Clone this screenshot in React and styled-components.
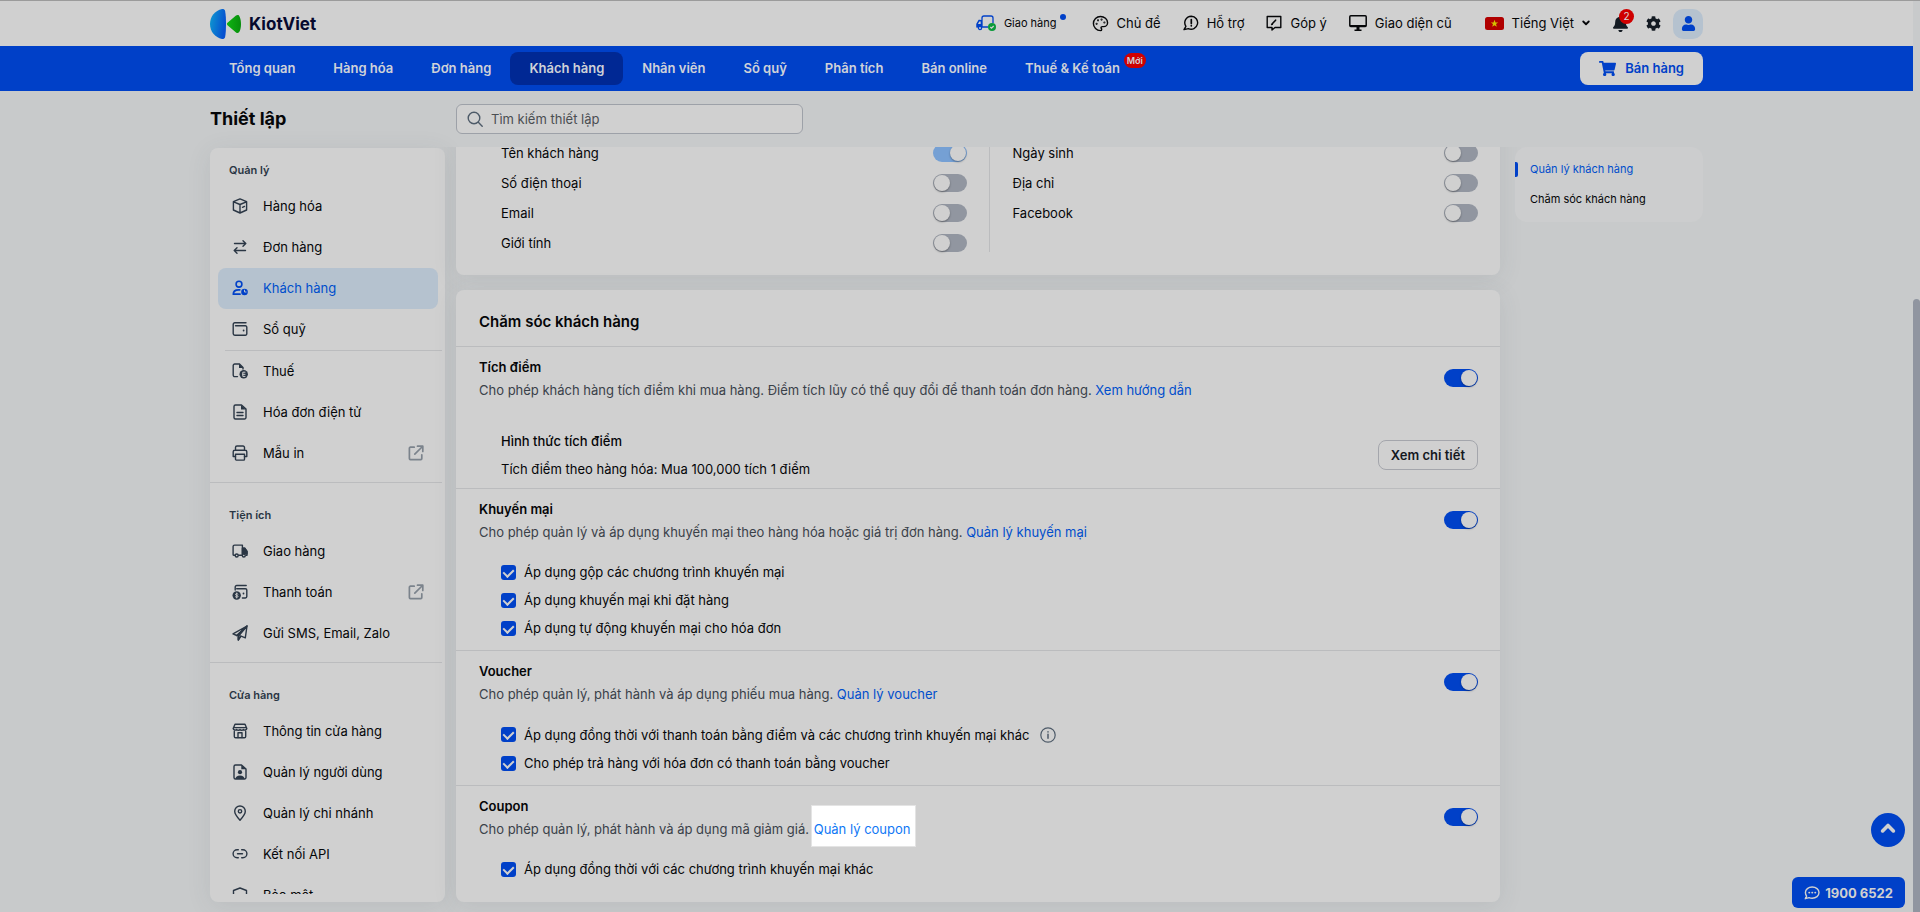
import React from 'react'
import styled, { createGlobalStyle, css } from 'styled-components'
import { FaBell, FaCog, FaUser, FaShoppingCart } from 'react-icons/fa'
import { LuPalette } from 'react-icons/lu'

const color = {
    page: '#c8cacb',
    card: '#d0d0d0',
    line: '#bbbcbe',
    blue: '#0040c8',
    link: '#004ecc',
    navy: '#002894',
    soft: '#b5c2cf',
    text: '#050608',
    muted: '#3a4149',
    icon: '#2a3644',
    grey: '#9196a0',
    red: '#cf0000',
}

const GlobalStyle = createGlobalStyle`
    * {
        box-sizing: border-box;
    }

    body {
        margin: 0;
        background: ${color.page};
        color: ${color.text};
        font-family: 'Inter', sans-serif;
        font-size: 13px;
        line-height: 20px;
    }

    h1, h2, h3, p, ul {
        margin: 0;
        padding: 0;
        font-size: inherit;
    }

    ul {
        list-style: none;
    }

    a {
        color: inherit;
        text-decoration: none;
    }

    button, input, select {
        font: inherit;
        color: inherit;
    }

    button {
        cursor: pointer;
        border: 0;
        padding: 0;
        background: none;
    }
`

const Shell = styled.div`
    display: grid;
    grid-template-columns: 1fr 7px;
    height: 100vh;
    overflow: hidden;
`

const Screen = styled.div`
    display: flex;
    flex-direction: column;
    min-width: 0;
    min-height: 0;
`

const Container = styled.div`
    width: 100%;
    max-width: 1493px;
    margin: 0 auto;
`

const ScrollTrack = styled.div`
    display: grid;
    grid-template-rows: 298fr 614fr;
    border-top: 1px solid #9b9b9b;
`

const ScrollThumb = styled.div`
    grid-row: 2;
    background: #9095a0;
    border-radius: 4px 4px 0 0;
`

// ---------- header ----------

const TopBar = styled.header`
    flex: none;
    height: 46px;
    background: ${color.card};
    border-top: 1px solid #9b9b9b;
`

const TopInner = styled(Container)`
    display: flex;
    align-items: center;
    justify-content: space-between;
    height: 100%;
`

const Brand = styled.a`
    display: flex;
    align-items: center;
    gap: 8px;
    color: #06092e;
    font-size: 17px;
    font-weight: 700;
`

const Tools = styled.div`
    display: flex;
    align-items: center;
    gap: 22px;
`

const Tool = styled.a`
    position: relative;
    display: flex;
    align-items: center;
    gap: 8px;
    padding-bottom: 1px;
    font-size: ${props => (props.$small ? '11px' : '13px')};
    margin-right: ${props => (props.$small ? '13px' : '0')};
`

const Dot = styled.span`
    position: absolute;
    top: 1px;
    right: -9px;
    width: 6px;
    height: 6px;
    border-radius: 50%;
    background: ${color.blue};
`

const Language = styled.button`
    display: flex;
    align-items: center;
    gap: 8px;
    margin-left: 11px;
    padding-bottom: 1px;
`

const Account = styled.div`
    display: flex;
    align-items: center;
    gap: 12px;
`

const Bell = styled.button`
    position: relative;
    display: flex;
    margin-right: 5px;
    color: #131a22;
`

const Count = styled.span`
    position: absolute;
    top: -6px;
    right: -5px;
    width: 15px;
    height: 15px;
    border-radius: 8px;
    background: ${color.red};
    color: #d8d8d8;
    font-size: 10px;
    line-height: 15px;
    text-align: center;
`

const Gear = styled.button`
    display: flex;
    color: #131a22;
`

const Avatar = styled.button`
    display: flex;
    align-items: center;
    justify-content: center;
    width: 30px;
    height: 30px;
    border-radius: 10px;
    background: ${color.soft};
    color: ${color.blue};
`

const NavBar = styled.nav`
    flex: none;
    height: 45px;
    background: ${color.blue};
`

const NavInner = styled(TopInner)``

const NavList = styled.ul`
    display: flex;
`

const NavLink = styled.a`
    position: relative;
    display: block;
    padding: 0 19px;
    border-radius: 8px;
    color: #cfd2d8;
    font-weight: 600;
    line-height: 33px;
    background: ${props => (props.$active ? color.navy : 'transparent')};
`

const NewBadge = styled.span`
    position: absolute;
    top: 1px;
    right: -7px;
    padding: 0 3px;
    border-radius: 8px;
    background: ${color.red};
    font-size: 9px;
    line-height: 15px;
`

const SellButton = styled.button`
    display: flex;
    align-items: center;
    gap: 9px;
    height: 33px;
    padding: 0 19px 1px;
    border-radius: 8px;
    background: ${color.card};
    color: ${color.blue};
    font-weight: 600;
`

// ---------- page ----------

const columns = css`
    display: grid;
    grid-template-columns: 235px minmax(0, 1fr);
    column-gap: 11px;
`

const TitleRow = styled(Container)`
    ${columns}
    flex: none;
    align-items: center;
    height: 56px;
`

const PageTitle = styled.h1`
    font-size: 18px;
    font-weight: 700;
`

const Search = styled.label`
    display: flex;
    align-items: center;
    gap: 8px;
    width: 347px;
    height: 30px;
    padding: 0 10px;
    border: 1px solid #9da1a8;
    border-radius: 6px;
    background: ${color.card};
    color: #4d5a68;
`

const SearchInput = styled.input`
    flex: 1;
    min-width: 0;
    border: 0;
    padding: 0;
    outline: 0;
    background: transparent;

    &::placeholder {
        color: #4b4e52;
        opacity: 1;
    }
`

const Body = styled(Container)`
    ${columns}
    grid-template-columns: 235px minmax(0, 1fr) 192px;
    flex: 1;
    min-height: 0;
`

const cardLook = css`
    background: ${color.card};
    border-radius: 8px;
    box-shadow: 0 4px 24px rgba(70, 75, 90, 0.1);
`

const Sidebar = styled.aside`
    ${cardLook}
    margin: 1px 0 10px;
    padding: 0 3px 8px 0;
    display: flex;
    min-height: 0;
`

const SideScroll = styled.div`
    flex: 1;
    overflow: hidden;
`

const SideGroup = styled.section`
    padding: ${props => (props.$first ? '12px' : '22px')} 0 8px;
    border-bottom: 1px solid ${color.line};
`

const SideHeading = styled.h2`
    padding: 0 19px 6px;
    color: ${color.icon};
    font-size: 11px;
    font-weight: 600;
`

const SideItem = styled.li`
    padding: 0 4px 0 8px;
`

const SideRule = styled.li`
    height: 1px;
    margin-left: 15px;
    background: ${color.line};
`

const SideLink = styled.a`
    display: flex;
    align-items: center;
    gap: 15px;
    height: 41px;
    padding: 0 14px 1px;
    border-radius: 8px;
    background: ${props => (props.$active ? color.soft : 'transparent')};
    color: ${props => (props.$active ? color.link : color.text)};

    > svg:first-child {
        color: ${props => (props.$active ? color.blue : color.icon)};
    }

    > svg:last-child:not(:first-child) {
        margin-left: auto;
        color: #7b838c;
    }
`

// the list is scrolled to its end, so the cards sit against the bottom edge
const Main = styled.main`
    display: flex;
    flex-direction: column;
    justify-content: flex-end;
    gap: 15px;
    min-height: 0;
    margin: 0 -32px;
    padding: 0 32px 10px;
    overflow: hidden;
`

const Card = styled.section`
    ${cardLook}
    flex: none;
`

const FieldCard = styled(Card)`
    display: flex;
    padding: 60px 22px 23px 45px;
`

const FieldColumn = styled.div`
    flex: 1 1 0;
    display: flex;
    flex-direction: column;
    gap: 12px;

    & + & {
        margin-left: 22px;
        padding-left: 23px;
        border-left: 1px solid ${color.line};
    }
`

const Field = styled.label`
    display: flex;
    align-items: center;
    justify-content: space-between;
    height: 18px;
`

const Toggle = styled.input.attrs({ type: 'checkbox', role: 'switch' })`
    appearance: none;
    flex: none;
    display: flex;
    align-items: center;
    justify-content: ${props => (props.checked ? 'flex-end' : 'flex-start')};
    width: 34px;
    height: 18px;
    margin: 0;
    padding: 1px;
    border-radius: 9px;
    background: ${props => (props.disabled ? '#75a0d4' : props.checked ? color.blue : color.grey)};

    &::before {
        content: '';
        width: 16px;
        height: 16px;
        border-radius: 50%;
        background: ${color.card};
        box-shadow: 0 1px 2px rgba(0, 0, 0, 0.35);
    }
`

const CardTitle = styled.h2`
    padding: 22px 23px 14px;
    font-size: 15px;
    font-weight: 600;
`

const Block = styled.section`
    padding: 9px 22px 8px 23px;
    border-top: 1px solid ${color.line};

    &:last-child {
        padding-bottom: 19px;
    }
`

const BlockHead = styled.div`
    display: flex;
    align-items: center;
    justify-content: space-between;
    line-height: 23px;

    > ${Toggle} {
        margin-bottom: 3px;
    }
`

const BlockTitle = styled.h3`
    font-weight: 600;
`

const BlockText = styled.p`
    color: ${color.muted};
`

const TextLink = styled.a`
    color: ${color.link};
`

const SpotLink = styled.a`
    padding: 15px 5px 9px 2px;
    margin-left: -2px;
    border: 1px solid #e4e4e4;
    background: #fff;
    color: #1078f5;
`

const Detail = styled.div`
    display: flex;
    align-items: center;
    justify-content: space-between;
    padding: 25px 0 0 22px;
    margin-bottom: -3px;
    line-height: 28px;
`

const DetailTitle = styled.h3`
    font-weight: 500;
`

const OutlineButton = styled.button`
    height: 30px;
    padding: 0 12px;
    border: 1px solid #a4a6ac;
    border-radius: 8px;
    color: #14181e;
    font-weight: 600;
`

const Checks = styled.ul`
    padding: 14px 0 0 22px;
`

const CheckRow = styled.li`
    display: flex;
    align-items: center;
    gap: 10px;
    min-height: ${props => (props.$hint ? '29px' : '28px')};
    color: ${color.text};

    > svg {
        color: #4d5a68;
    }
`

const CheckLabel = styled.label`
    display: flex;
    align-items: center;
    gap: 8px;
`

const CheckBox = styled.input.attrs({ type: 'checkbox' })`
    appearance: none;
    display: flex;
    justify-content: center;
    width: 15px;
    height: 15px;
    margin: 0;
    border-radius: 3px;
    background: ${color.blue};

    &::before {
        content: '';
        width: 5px;
        height: 8px;
        margin-top: 2px;
        border: solid ${color.card};
        border-width: 0 2px 2px 0;
        transform: rotate(45deg);
    }
`

const Outline = styled.nav`
    align-self: start;
    margin-left: 4px;
    padding: 7px 0 8px;
    border-radius: 12px;
    background: #cccdce;
    font-size: 11px;
    line-height: 30px;
`

const OutlineLink = styled.a`
    display: flex;
    align-items: center;
    gap: 12px;
    color: ${props => (props.$active ? color.link : color.text)};

    &::before {
        content: '';
        width: 3px;
        height: 15px;
        border-radius: 0 2px 2px 0;
        background: ${props => (props.$active ? color.blue : 'transparent')};
    }
`

const ToTop = styled.button`
    position: fixed;
    right: 15px;
    bottom: 65px;
    display: flex;
    align-items: center;
    justify-content: center;
    width: 34px;
    height: 34px;
    padding-bottom: 5px;
    border-radius: 50%;
    background: ${color.blue};
    color: ${color.card};
`

const Hotline = styled.a`
    position: fixed;
    right: 15px;
    bottom: 4px;
    display: flex;
    align-items: center;
    gap: 5px;
    height: 31px;
    padding: 0 12px;
    border-radius: 6px;
    background: ${color.blue};
    color: ${color.card};
    font-weight: 700;
`

// ---------- drawings ----------

const Glyph = ({ size = 16, children }) => (
    <svg width={size} height={size} viewBox="0 0 16 16" fill="none" stroke="currentColor"
        strokeWidth="1.4" strokeLinecap="round" strokeLinejoin="round" aria-hidden="true">
        {children}
    </svg>
)

const Logo = () => (
    <svg width="31" height="30" viewBox="0 0 31 30" aria-hidden="true">
        <defs>
            <linearGradient id="half" x1="0" y1="0" x2="1" y2="0.3">
                <stop offset="0" stopColor="#0f9bd0" />
                <stop offset="1" stopColor="#0650d0" />
            </linearGradient>
            <linearGradient id="play" x1="0" y1="0" x2="1" y2="0">
                <stop offset="0" stopColor="#0fb512" />
                <stop offset="1" stopColor="#078d0c" />
            </linearGradient>
        </defs>
        <path d="M12 0C5 1.500 0 7.500 0 15s5 13.500 12 15c2 .2 2.800-.6 3.100-2C15.800 24.500 16 20 16 15s-.2-9.500-.9-13C14.800.6 14 -.2 12 0z" fill="url(#half)" />
        <path d="M17.500 13.800 26 6.500c1.500-1 2.900-.6 3.500.9C30.600 9.600 31 12 31 15s-.4 5.400-1.500 7.600c-.6 1.500-2 1.900-3.500.9l-8.500-7.300c-.8-.8-.8-1.600 0-2.400z" fill="url(#play)" />
    </svg>
)

const Delivery = () => (
    <svg width="20" height="16" viewBox="0 0 20 16" fill="none" stroke={color.blue} strokeWidth="1.300" aria-hidden="true">
        <path d="M6 12.500V3a2 2 0 0 1 2-2h7a2 2 0 0 1 2 2v5M6 12h6M4.500 5.500H3L1 9v3.500" />
        <path d="M6 5H3.500L.7 9v3.500H6z" fill={color.blue} stroke="none" />
        <path d="M3.300 6.500h1.400V9H2z" fill={color.card} stroke="none" />
        <circle cx="4" cy="13" r="1.600" fill={color.card} />
        <circle cx="16" cy="12" r="4" fill="#0a9a3a" stroke="none" />
        <path d="m14.300 12 1.200 1.200 2.200-2.200" stroke={color.card} />
    </svg>
)

const Support = () => (
    <Glyph>
        <path d="M8.300 1.200a6.500 6.500 0 1 1-2.900 12.400L1 14.600l1.900-3.300A6.500 6.500 0 0 1 8.300 1.200z" />
        <path d="M8.300 4.500v4M8.300 10.600v.2" strokeWidth="1.700" />
    </Glyph>
)

const Feedback = () => (
    <Glyph>
        <path d="M1.200 1.500h13.600v11H9L6 15v-2.500H1.200z" />
        <path d="m6 9 3.600-3.800M5.700 9.400l.6-.2" strokeWidth="1.600" />
    </Glyph>
)

const Monitor = () => (
    <svg width="18" height="16" viewBox="0 0 18 16" fill="none" stroke="currentColor" strokeWidth="1.500" aria-hidden="true">
        <rect x=".8" y=".8" width="16.400" height="10.600" rx="1" />
        <path d="M1 10h16v2H1zM7.500 12h3v2.500h2V16h-7v-1.500h2z" fill="currentColor" stroke="none" />
    </svg>
)

const Flag = () => (
    <svg width="19" height="13" viewBox="0 0 19 13" aria-hidden="true">
        <rect width="19" height="13" rx="2.500" fill="#b00000" />
        <path d="m9.500 2.700 1 2.700h2.700l-2.200 1.700.8 2.700-2.300-1.600-2.300 1.600.8-2.700-2.200-1.700h2.700z" fill="#d4c000" />
    </svg>
)

const ChevronDown = () => (
    <Glyph size={8}>
        <path d="m2.500 5 5.500 5.500L13.500 5" strokeWidth="3.600" />
    </Glyph>
)

const ChevronUp = () => (
    <Glyph>
        <path d="M2.600 10.900 8 5.500l5.400 5.400" strokeWidth="3.600" />
    </Glyph>
)

const SearchIcon = () => (
    <Glyph>
        <circle cx="7" cy="7" r="5.800" />
        <path d="m11.300 11.300 3.900 3.900" />
    </Glyph>
)

const Box = () => (
    <Glyph>
        <path d="M8 .9 14.600 3.600v8.400L8 15 1.400 12V3.600zM1.600 3.800 8 6.500l6.400-2.700M8 6.500V15M10.500 9.300l2-.9" />
    </Glyph>
)

const Swap = () => (
    <Glyph>
        <path d="M2.500 4.500h11.300M11 1.800l2.800 2.700L11 7.200M13.500 11.500H2.200M5 8.800l-2.800 2.700L5 14.200" />
    </Glyph>
)

const Customer = () => (
    <Glyph>
        <circle cx="7" cy="4.200" r="2.900" strokeWidth="1.600" />
        <path d="M8 14.200H1.300c0-3 2.200-4.400 5.200-4.400h1.300" strokeWidth="1.700" />
        <circle cx="12.500" cy="12" r="3.300" fill="currentColor" stroke="none" />
        <path d="M12.500 10.200V12h1.600" stroke={color.soft} strokeWidth="1" />
    </Glyph>
)

const Wallet = () => (
    <Glyph>
        <path d="M14 1.800H2.800A1.600 1.600 0 0 0 1.200 3.400v9.200a1.600 1.600 0 0 0 1.600 1.600h10.600a1.400 1.400 0 0 0 1.400-1.400V6.200a1.400 1.400 0 0 0-1.400-1.400H3.500" />
        <circle cx="11.600" cy="9.500" r=".9" fill="currentColor" stroke="none" />
    </Glyph>
)

const Tax = () => (
    <Glyph>
        <path d="M5.500 13.600H2.700a1.500 1.500 0 0 1-1.500-1.500V2.500A1.500 1.500 0 0 1 2.700 1h4.800L11 4.500V6" />
        <path d="M7 .8V5h4.400z" fill="currentColor" stroke="none" />
        <circle cx="11.700" cy="11.300" r="4.200" fill="currentColor" stroke="none" />
        <path d="M13 9.200h-2.200v4.200H13M10.800 11.300H13" stroke={color.card} strokeWidth="1" />
    </Glyph>
)

const Invoice = () => (
    <Glyph>
        <path d="M3.500 1h6L14 5v8.500A1.500 1.500 0 0 1 12.500 15h-9A1.500 1.500 0 0 1 2 13.500v-11A1.500 1.500 0 0 1 3.500 1z" />
        <path d="M9 1v4.500h5z" fill="currentColor" stroke="none" />
        <path d="M5 8.500h6M5 11.500h6" />
    </Glyph>
)

const Printer = () => (
    <Glyph>
        <path d="M3.500 5V2.500A1.500 1.500 0 0 1 5 1h6a1.500 1.500 0 0 1 1.500 1.500V5M3.500 11.500H1.200V6.800A1.600 1.600 0 0 1 2.800 5.200h10.400a1.600 1.600 0 0 1 1.600 1.600v4.700h-2.300" />
        <path d="M3.500 9.300h9v5a.8.8 0 0 1-.8.8H4.300a.8.8 0 0 1-.8-.8z" />
    </Glyph>
)

const Truck = () => (
    <Glyph>
        <path d="M3 12.300H2a.9.9 0 0 1-.9-.9V3.600a1.500 1.500 0 0 1 1.500-1.500h7.800V12.300H6.500M10.400 5.200h2.300l2.300 3.300v3.800h-.8" />
        <path d="M10.400 5.200h2.300l2.300 3.300v2.300h-4.600z" fill="currentColor" />
        <circle cx="4.700" cy="12.500" r="1.500" fill={color.card} />
        <circle cx="11.800" cy="12.500" r="1.500" fill={color.card} />
    </Glyph>
)

const Payment = () => (
    <Glyph>
        <path d="M14.200 1.500H4.700A1.500 1.500 0 0 0 3.200 3v3M4.700 4.700h8.700a1.400 1.400 0 0 1 1.400 1.400v6.500a1.400 1.400 0 0 1-1.400 1.400h-3" />
        <circle cx="11.500" cy="9.500" r=".9" fill="currentColor" stroke="none" />
        <circle cx="4.700" cy="11.500" r="4.200" fill="currentColor" stroke="none" />
        <path d="M6 10.100c-.5-.6-2.500-.7-2.500.4 0 1.300 2.500.6 2.500 1.900 0 1.100-2 1.100-2.600.4M4.700 9v5" stroke={color.card} strokeWidth=".9" />
    </Glyph>
)

const Send = () => (
    <Glyph>
        <path d="M15 1 1 8.800l3.800 1.700zM15 1l-1.700 11.800-4.800-1.900L6.300 15v-4z" />
        <path d="M4.800 10.500 15 1 6.300 11v4l2.400-3.500" />
    </Glyph>
)

const Store = () => (
    <Glyph>
        <path d="M3 1.200h10l1.800 4.300a2 2 0 0 1-3.400 1 2.300 2.300 0 0 1-3.400 0 2.300 2.300 0 0 1-3.400 0 2 2 0 0 1-3.400-1zM1.700 4.600h12.600M2.300 8.500v5A1.300 1.300 0 0 0 3.600 14.800h8.800a1.300 1.300 0 0 0 1.300-1.300v-5" />
        <path d="M6 14.500V9.800h4v4.700" />
    </Glyph>
)

const UserFile = () => (
    <Glyph>
        <path d="M3.500 1h6L14 5v8.500A1.500 1.500 0 0 1 12.500 15h-9A1.500 1.500 0 0 1 2 13.500v-11A1.500 1.500 0 0 1 3.500 1z" />
        <path d="M9.300 1v4.300H14zM3.500 15c0-2.300 1.800-3.500 4.500-3.500s4.500 1.200 4.500 3.500z" fill="currentColor" stroke="none" />
        <circle cx="8" cy="8.200" r="2.100" fill="currentColor" stroke="none" />
    </Glyph>
)

const Pin = () => (
    <Glyph>
        <path d="M8 15.200C5 12 2.700 9 2.700 6.300a5.300 5.300 0 0 1 10.600 0C13.300 9 11 12 8 15.200z" />
        <circle cx="8" cy="6.300" r="1.700" />
    </Glyph>
)

const Chain = () => (
    <Glyph>
        <path d="M6.300 3.700H5.100a4 4 0 0 0 0 8h1.200M9.700 3.700h1.200a4 4 0 0 1 0 8H9.700M5.500 7.700h5" />
    </Glyph>
)

const Shield = () => (
    <Glyph>
        <path d="M8 1 14.500 3.500V8c0 3.500-2.700 6-6.500 7.200C4.200 14 1.500 11.500 1.500 8V3.500z" />
    </Glyph>
)

const External = () => (
    <Glyph>
        <path d="M6.200 2.200H2.400a1 1 0 0 0-1 1v10.400a1 1 0 0 0 1 1h10.400a1 1 0 0 0 1-1V9.800M9.500 1.200h5.300v5.300M14.500 1.500 6.800 9.200" strokeWidth="1.700" />
    </Glyph>
)

const Info = () => (
    <Glyph>
        <circle cx="8" cy="8" r="7.200" strokeWidth="1.200" />
        <path d="M8 7.300v4M8 4.700v.2" strokeWidth="1.500" />
    </Glyph>
)

const Chat = () => (
    <Glyph>
        <path d="M8.200 2C12 2 15 4.400 15 7.600s-3 5.600-6.800 5.600c-1.100 0-2.200-.2-3.100-.6L1.300 13.700l1.300-2.600C1.800 10 1.400 8.900 1.400 7.600 1.400 4.400 4.400 2 8.200 2z" />
        <path d="M5.200 7.600h.1M8.200 7.600h.1M11.200 7.600h.1" strokeWidth="1.900" />
    </Glyph>
)

// ---------- data ----------

const navItems = ['Tổng quan', 'Hàng hóa', 'Đơn hàng', 'Khách hàng', 'Nhân viên', 'Sổ quỹ', 'Phân tích', 'Bán online']

const sideGroups = [
    {
        title: 'Quản lý',
        items: [
            { text: 'Hàng hóa', Icon: Box },
            { text: 'Đơn hàng', Icon: Swap },
            { text: 'Khách hàng', Icon: Customer, active: true },
            { text: 'Sổ quỹ', Icon: Wallet, rule: true },
            { text: 'Thuế', Icon: Tax },
            { text: 'Hóa đơn điện tử', Icon: Invoice },
            { text: 'Mẫu in', Icon: Printer, external: true },
        ],
    },
    {
        title: 'Tiện ích',
        items: [
            { text: 'Giao hàng', Icon: Truck },
            { text: 'Thanh toán', Icon: Payment, external: true },
            { text: 'Gửi SMS, Email, Zalo', Icon: Send },
        ],
    },
    {
        title: 'Cửa hàng',
        items: [
            { text: 'Thông tin cửa hàng', Icon: Store },
            { text: 'Quản lý người dùng', Icon: UserFile },
            { text: 'Quản lý chi nhánh', Icon: Pin },
            { text: 'Kết nối API', Icon: Chain },
            { text: 'Bảo mật', Icon: Shield },
        ],
    },
]

const fieldColumns = [
    [
        { text: 'Tên khách hàng', on: true, locked: true },
        { text: 'Số điện thoại' },
        { text: 'Email' },
        { text: 'Giới tính' },
    ],
    [{ text: 'Ngày sinh' }, { text: 'Địa chỉ' }, { text: 'Facebook' }],
]

const blocks = [
    {
        title: 'Tích điểm',
        text: 'Cho phép khách hàng tích điểm khi mua hàng. Điểm tích lũy có thể quy đổi để thanh toán đơn hàng.',
        link: 'Xem hướng dẫn',
        detail: ['Hình thức tích điểm', 'Tích điểm theo hàng hóa: Mua 100,000 tích 1 điểm', 'Xem chi tiết'],
    },
    {
        title: 'Khuyến mại',
        text: 'Cho phép quản lý và áp dụng khuyến mại theo hàng hóa hoặc giá trị đơn hàng.',
        link: 'Quản lý khuyến mại',
        checks: [
            { text: 'Áp dụng gộp các chương trình khuyến mại' },
            { text: 'Áp dụng khuyến mại khi đặt hàng' },
            { text: 'Áp dụng tự động khuyến mại cho hóa đơn' },
        ],
    },
    {
        title: 'Voucher',
        text: 'Cho phép quản lý, phát hành và áp dụng phiếu mua hàng.',
        link: 'Quản lý voucher',
        checks: [
            { text: 'Áp dụng đồng thời với thanh toán bằng điểm và các chương trình khuyến mại khác', hint: true },
            { text: 'Cho phép trả hàng với hóa đơn có thanh toán bằng voucher' },
        ],
    },
    {
        title: 'Coupon',
        text: 'Cho phép quản lý, phát hành và áp dụng mã giảm giá.',
        link: 'Quản lý coupon',
        spot: true,
        checks: [{ text: 'Áp dụng đồng thời với các chương trình khuyến mại khác' }],
    },
]

const Header = () => (
    <>
        <TopBar>
            <TopInner>
                <Brand href="#"><Logo />KiotViet</Brand>
                <Tools>
                    <Tool href="#" $small><Delivery />Giao hàng<Dot /></Tool>
                    <Tool href="#"><LuPalette size={17} />Chủ đề</Tool>
                    <Tool href="#"><Support />Hỗ trợ</Tool>
                    <Tool href="#"><Feedback />Góp ý</Tool>
                    <Tool href="#"><Monitor />Giao diện cũ</Tool>
                    <Language><Flag />Tiếng Việt<ChevronDown /></Language>
                    <Account>
                        <Bell aria-label="Thông báo"><FaBell size={17} /><Count>2</Count></Bell>
                        <Gear aria-label="Thiết lập"><FaCog size={15} /></Gear>
                        <Avatar aria-label="Tài khoản"><FaUser size={15} /></Avatar>
                    </Account>
                </Tools>
            </TopInner>
        </TopBar>
        <NavBar>
            <NavInner>
                <NavList>
                    {navItems.map(item => (
                        <li key={item}><NavLink href="#" $active={item === 'Khách hàng'}>{item}</NavLink></li>
                    ))}
                    <li><NavLink href="#">Thuế &amp; Kế toán<NewBadge>Mới</NewBadge></NavLink></li>
                </NavList>
                <SellButton><FaShoppingCart size={17} />Bán hàng</SellButton>
            </NavInner>
        </NavBar>
    </>
)

const SideMenu = () => (
    <Sidebar>
        <SideScroll>
            {sideGroups.map((group, index) => (
                <SideGroup key={group.title} $first={index === 0}>
                    <SideHeading>{group.title}</SideHeading>
                    <ul>
                        {group.items.map(({ text, Icon, active, rule, external }) => (
                            <React.Fragment key={text}>
                                <SideItem>
                                    <SideLink href="#" $active={active}>
                                        <Icon />
                                        <span>{text}</span>
                                        {external && <External />}
                                    </SideLink>
                                </SideItem>
                                {rule && <SideRule />}
                            </React.Fragment>
                        ))}
                    </ul>
                </SideGroup>
            ))}
        </SideScroll>
    </Sidebar>
)

const SettingBlock = ({ block }) => {
    const Link = block.spot ? SpotLink : TextLink

    return (
        <Block>
            <BlockHead>
                <div>
                    <BlockTitle>{block.title}</BlockTitle>
                    <BlockText>{block.text} <Link href="#">{block.link}</Link></BlockText>
                </div>
                <Toggle checked readOnly aria-label={block.title} />
            </BlockHead>
            {block.detail && (
                <Detail>
                    <div>
                        <DetailTitle>{block.detail[0]}</DetailTitle>
                        <p>{block.detail[1]}</p>
                    </div>
                    <OutlineButton>{block.detail[2]}</OutlineButton>
                </Detail>
            )}
            {block.checks && (
                <Checks>
                    {block.checks.map(check => (
                        <CheckRow key={check.text} $hint={check.hint}>
                            <CheckLabel><CheckBox checked readOnly />{check.text}</CheckLabel>
                            {check.hint && <Info />}
                        </CheckRow>
                    ))}
                </Checks>
            )}
        </Block>
    )
}

const App = () => (
    <>
        <GlobalStyle />
        <Shell>
            <Screen>
                <Header />
                <TitleRow>
                    <PageTitle>Thiết lập</PageTitle>
                    <Search>
                        <SearchIcon />
                        <SearchInput type="text" placeholder="Tìm kiếm thiết lập" />
                    </Search>
                </TitleRow>
                <Body>
                    <SideMenu />
                    <Main>
                        <FieldCard>
                            {fieldColumns.map((fields, index) => (
                                <FieldColumn key={index}>
                                    {fields.map(field => (
                                        <Field key={field.text}>
                                            {field.text}
                                            <Toggle checked={!!field.on} disabled={field.locked} readOnly />
                                        </Field>
                                    ))}
                                </FieldColumn>
                            ))}
                        </FieldCard>
                        <Card>
                            <CardTitle>Chăm sóc khách hàng</CardTitle>
                            {blocks.map(block => <SettingBlock key={block.title} block={block} />)}
                        </Card>
                    </Main>
                    <Outline>
                        <OutlineLink href="#" $active>Quản lý khách hàng</OutlineLink>
                        <OutlineLink href="#">Chăm sóc khách hàng</OutlineLink>
                    </Outline>
                </Body>
            </Screen>
            <ScrollTrack><ScrollThumb /></ScrollTrack>
        </Shell>
        <ToTop aria-label="Lên đầu trang"><ChevronUp /></ToTop>
        <Hotline href="tel:19006522"><Chat />1900 6522</Hotline>
    </>
)

export default App
